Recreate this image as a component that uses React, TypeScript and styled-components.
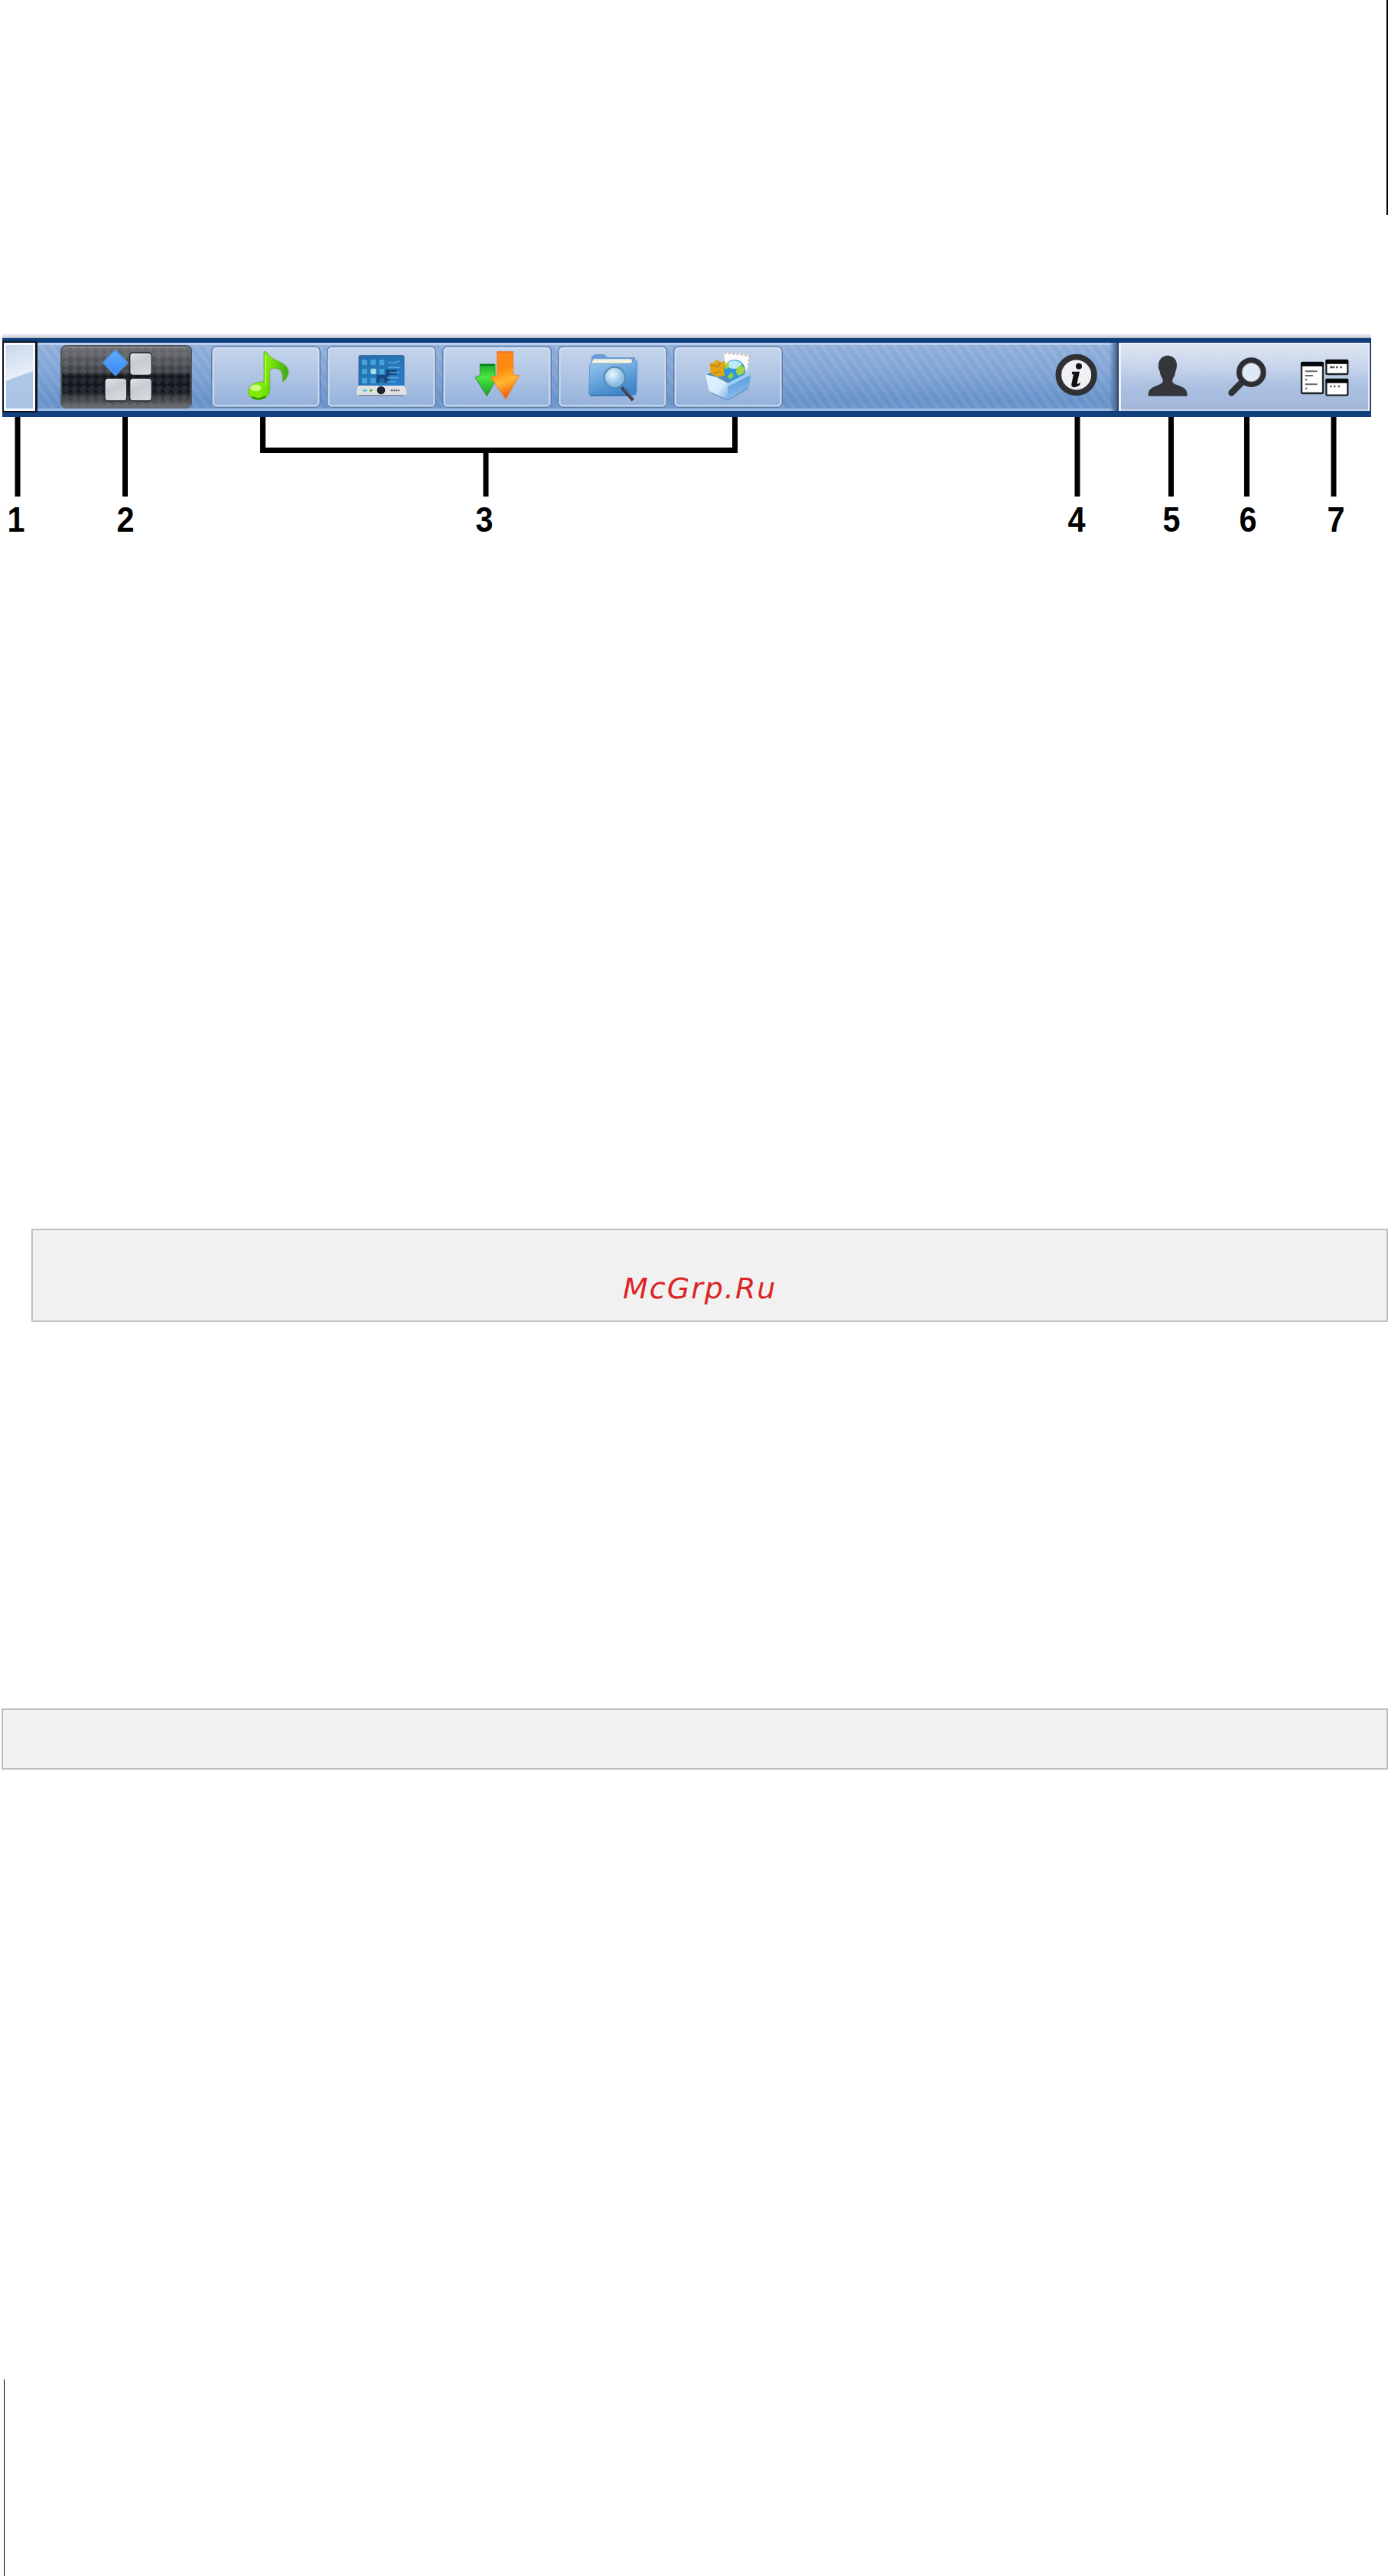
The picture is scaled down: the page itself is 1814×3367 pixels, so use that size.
import React from 'react';
import styled, { createGlobalStyle } from 'styled-components';

const GlobalStyle = createGlobalStyle`
  body {
    margin: 0;
    background: #ffffff;
  }
`;

const Page = styled.main`
  display: flex;
  flex-direction: column;
  width: 1814px;
  height: 3367px;
  overflow: hidden;
  background: #ffffff;
`;

const HeaderRule = styled.div`
  align-self: flex-end;
  width: 2px;
  height: 281px;
  background: #000;
`;

const Figure = styled.figure`
  margin: 156px 0 0 3px;
  width: 1789px;
  height: 269px;
`;

const TopStrip = styled.div`
  height: 5px;
  background: linear-gradient(#dce3ee 0 50%, #c4c1c4 60% 100%);
`;

const Taskbar = styled.div`
  box-sizing: border-box;
  display: flex;
  height: 103px;
  border-top: 6px solid #0f3e7c;
  border-bottom: 8px solid #123f7d;
  background:
    linear-gradient(#bccfea, #bccfea) top / 100% 3px no-repeat,
    linear-gradient(#a3bee6, #a3bee6) bottom / 100% 3px no-repeat,
    repeating-linear-gradient(55deg, rgba(255, 255, 255, 0.05) 0 5px, rgba(30, 70, 150, 0.03) 5px 11px),
    linear-gradient(#94b2dc, #82a6d6 45%, #6894cb 85%, #7099cc);
`;

const ShowDesktop = styled.div`
  box-sizing: border-box;
  flex: none;
  width: 46px;
  height: 93px;
  margin: -2px 30px 0 0;
  border: solid #10151d;
  border-width: 2px 3px 2px 2px;
  box-shadow: inset 0 0 0 3px #f8fafd;
  background: linear-gradient(160deg, #c3d5ec, #e8eff8 48%, #aec6e6 50%, #a9c3e6);
`;

const MenuButton = styled.div`
  box-sizing: border-box;
  flex: none;
  width: 172px;
  height: 83px;
  margin: 3px 25px 0 0;
  border: 2px solid #4e545e;
  border-bottom: 4px solid #666a70;
  border-radius: 8px;
  box-shadow: inset 0 1px 1px #9a9a9a;
  background:
    linear-gradient(rgba(128, 128, 130, 0.85), rgba(82, 84, 88, 0.7) 42%, rgba(22, 26, 32, 0.75) 50%, rgba(24, 27, 33, 0.7) 75%, rgba(112, 112, 114, 0.85)),
    repeating-conic-gradient(from 45deg, #0b1018 0 25%, #4b515b 0 50%) 0 0 / 11px 11px;

  svg {
    display: block;
    margin: -2px;
  }
`;

const AppList = styled.div`
  display: flex;
  flex: none;
  gap: 8px;
  margin-top: 4px;
`;

const AppButton = styled.div`
  width: 143px;
  height: 81px;
  border-radius: 7px;
  box-shadow: inset 0 0 0 1.5px #5c7ba9, inset 0 0 0 3.5px #d3dff0;
  background: linear-gradient(#c6d5eb, #b1c6e5 45%, #92b0db);

  svg {
    display: block;
  }
`;

const InfoButton = styled.div`
  display: flex;
  flex: none;
  margin-left: auto;
  width: 101px;
  background: linear-gradient(90deg, transparent 88%, #4c6c99 97%, #1d304b);
`;

const Tray = styled.div`
  box-sizing: border-box;
  display: grid;
  flex: none;
  grid-template-columns: 119px 90px 121px;
  width: 330px;
  box-shadow: inset -2px 0 0 #34496a, inset 3px 0 0 #edf2f9, inset -4px 0 0 #e8effa, inset 0 2px 0 #eef3fa, inset 0 -2px 0 #ced9ec;
  background: linear-gradient(#dfe6f2, #c5d3ea 38%, #aec2e2 60%, #a0b6da);
`;

const CalloutLines = styled.svg`
  display: block;
  width: 1789px;
  height: 104px;
`;

const Labels = styled.div`
  display: flex;
  margin-top: 7px;
  height: 46px;
`;

// slightly condensed numerals
const Label = styled.span<{ $gap: number }>`
  flex: none;
  width: 26px;
  margin-left: ${({ $gap }) => $gap}px;
  color: #000;
  font: bold 46px/46px 'Liberation Sans', Arial, sans-serif;
  text-align: center;
  transform: scaleX(0.9);
`;

const NoteBox = styled.section<{ $top: number; $left: number; $height: number }>`
  box-sizing: border-box;
  flex: none;
  height: ${({ $height }) => $height}px;
  margin: ${({ $top, $left }) => `${$top}px 0 0 ${$left}px`};
  border: 2px solid #bfbfbf;
  background: #f1f1f1;
`;

const SiteName = styled.p`
  margin: 53px 0 0 771px;
  color: #dc2424;
  font: oblique 38px/46px 'DejaVu Sans', sans-serif;
  letter-spacing: 2px;
`;

const FooterRule = styled.div`
  width: 1px;
  height: 257px;
  margin: 797px 0 0 5px;
  background: #000;
`;

const MenuIcon = () => (
  <svg width="172" height="83" viewBox="237 63 516 249">
    <defs>
      <linearGradient id="tile" x1="0" y1="0" x2="0.4" y2="1">
        <stop offset="0" stopColor="#e3e6ea" />
        <stop offset="0.5" stopColor="#c6cbd1" />
        <stop offset="1" stopColor="#d5dade" />
      </linearGradient>
      <linearGradient id="gem" x1="0" y1="0" x2="0" y2="1">
        <stop offset="0" stopColor="#60b0ff" />
        <stop offset="1" stopColor="#3a86f4" />
      </linearGradient>
    </defs>
    <path d="M452 83 499 132 452 181 405 132z" fill="url(#gem)" stroke="#4c95ee" strokeWidth="6" strokeLinejoin="round" />
    <g fill="url(#tile)" stroke="#22262c" strokeWidth="4">
      <rect x="509" y="93" width="86" height="88" rx="13" />
      <rect x="411" y="193" width="86" height="89" rx="13" />
      <rect x="509" y="193" width="86" height="89" rx="13" />
    </g>
  </svg>
);

const MusicIcon = () => (
  <svg width="143" height="81" viewBox="51 66 429 243">
    <defs>
      <linearGradient id="note" x1="0" y1="0" x2="1" y2="0.3">
        <stop offset="0" stopColor="#8df000" />
        <stop offset="0.55" stopColor="#7be80a" />
        <stop offset="1" stopColor="#3fae1c" />
      </linearGradient>
    </defs>
    <path
      d="M258 88 270 92C280 116 304 120 328 133 354 148 359 166 349 187 345 196 339 204 332 206 329 196 336 177 322 163 309 151 292 151 281 160V240C279 264 260 277 236 277 211 277 197 263 197 245 198 221 222 206 258 207z"
      fill="url(#note)"
      stroke="#6fb03f"
      strokeWidth="3"
    />
    <ellipse cx="226" cy="231" rx="22" ry="13" fill="#dcff9a" opacity="0.8" />
    <path d="M210 266Q238 283 264 264" fill="none" stroke="#2c9500" strokeWidth="7" />
    <path d="M264 102V220" stroke="#b5ff30" strokeWidth="5" />
  </svg>
);

const MonitorIcon = () => (
  <svg width="143" height="81" viewBox="504 66 429 243">
    <defs>
      <linearGradient id="screen" x1="0" y1="0" x2="1" y2="1">
        <stop offset="0" stopColor="#286dac" />
        <stop offset="1" stopColor="#2480c7" />
      </linearGradient>
    </defs>
    <rect x="630" y="104" width="177" height="123" rx="4" fill="url(#screen)" stroke="#2b6698" strokeWidth="3" />
    <path d="M735 160H778V180H748V211H700V180H735z" fill="#153f72" opacity="0.85" />
    <g fill="#4aa8dc">
      {[120, 156, 192].map((y) =>
        [642, 676, 710].map((x) => <rect key={`${x}-${y}`} x={x} y={y} width="20" height="22" rx="4" opacity={x === 710 && y === 192 ? 0.3 : 0.9} />),
      )}
    </g>
    <rect x="677" y="155" width="21" height="22" rx="5" fill="#a2e1dc" />
    <path d="M744 132H775L790 125M744 151H790M752 171H788M741 191H785M741 207H774" stroke="#5aa5da" strokeWidth="5" fill="none" />
    <path d="M628 222H807L818 246Q818 260 803 260H635Q619 260 621 246z" fill="#e2e2e5" />
    <path d="M630 261H806" stroke="#77839a" strokeWidth="4" />
    <circle cx="717" cy="240" r="16" fill="#18252d" />
    <rect x="644" y="236" width="19" height="9" rx="4" fill="#68c5d9" />
    <path d="M672 234 687 241 672 248z" fill="#55b72a" />
    <path d="M755 241H791" stroke="#665d65" strokeWidth="6" strokeDasharray="7 2" />
  </svg>
);

const DownloadIcon = () => (
  <svg width="143" height="81" viewBox="57 66 429 243">
    <defs>
      <linearGradient id="orange" x1="0" y1="0" x2="0.25" y2="1">
        <stop offset="0" stopColor="#ff8520" />
        <stop offset="0.45" stopColor="#ff8b0b" />
        <stop offset="0.7" stopColor="#ffb92e" />
        <stop offset="1" stopColor="#f1641b" />
      </linearGradient>
      <linearGradient id="green" x1="0" y1="0" x2="0" y2="1">
        <stop offset="0" stopColor="#16a922" />
        <stop offset="0.4" stopColor="#4be744" />
        <stop offset="1" stopColor="#149d27" />
      </linearGradient>
    </defs>
    <path d="M205 138H264V186H275L232 263 186 190 205 182z" fill="url(#green)" stroke="#2d9837" strokeWidth="3" strokeLinejoin="round" />
    <path d="M205 141H261" stroke="#087b22" strokeWidth="6" />
    <path d="M272 89H335V181H359L306 276 247 189 272 183z" fill="url(#orange)" stroke="#e78135" strokeWidth="3" strokeLinejoin="round" />
    <path d="M274 91H333" stroke="#ed7427" strokeWidth="5" />
  </svg>
);

const FileSearchIcon = () => (
  <svg width="143" height="81" viewBox="510 66 429 243">
    <defs>
      <linearGradient id="folder" x1="0" y1="0" x2="0.5" y2="1">
        <stop offset="0" stopColor="#9dcaf0" />
        <stop offset="1" stopColor="#3e86cb" />
      </linearGradient>
      <radialGradient id="lens" cx="0.4" cy="0.35">
        <stop offset="0" stopColor="#ecf9ff" />
        <stop offset="1" stopColor="#8dbce2" />
      </radialGradient>
    </defs>
    <path d="M636 150 643 107 656 99H691L705 111H812L819 150z" fill="#6a9dd5" />
    <path d="M641 136 650 118H798L806 137z" fill="#f1f2df" />
    <path d="M635 143Q637 136 648 136H797L806 123Q822 120 822 132L819 248Q818 261 804 261H639Q632 261 632 252z" fill="url(#folder)" stroke="#639ad2" strokeWidth="3" />
    <path d="M636 261H780" stroke="#38699e" strokeWidth="4" />
    <circle cx="733" cy="190" r="41" fill="url(#lens)" stroke="#5486b5" strokeWidth="6" />
    <path d="M761 229 805 279" stroke="#3a3a4c" strokeWidth="13" />
    <path d="M767 232 803 270" stroke="#6d6570" strokeWidth="4" />
  </svg>
);

const PackageIcon = () => (
  <svg width="143" height="81" viewBox="963 66 429 243">
    <defs>
      <linearGradient id="boxFront" x1="0" y1="0" x2="1" y2="1">
        <stop offset="0" stopColor="#e3f4ff" />
        <stop offset="0.6" stopColor="#d4ebfc" />
        <stop offset="1" stopColor="#76abdf" />
      </linearGradient>
      <linearGradient id="boxSide" x1="0" y1="0" x2="0.3" y2="1">
        <stop offset="0" stopColor="#4a91db" />
        <stop offset="1" stopColor="#8fbeed" />
      </linearGradient>
    </defs>
    <path d="M1090 181 1150 151 1266 184 1177 216z" fill="#5588bd" />
    <path d="M1160 92 1261 101 1256 162 1168 154z" fill="#fafbfc" />
    <path d="M1163 95 1260 104 1255 158" fill="none" stroke="#d2a9aa" strokeWidth="5" strokeDasharray="8 8" />
    <path d="M1105 135 1123 132 1133 119 1147 130 1167 125 1164 183 1136 188 1109 174z" fill="#e3a512" />
    <path d="M1108 139 1138 148 1148 133M1120 173 1148 168" fill="none" stroke="#b08822" strokeWidth="5" />
    <circle cx="1203" cy="163" r="42" fill="#3197da" />
    <ellipse cx="1202" cy="140" rx="29" ry="16" fill="#bce8f7" />
    <path d="M1211 153 1228 141 1243 155 1239 174 1218 184 1209 170zM1167 139 1180 130 1181 149 1166 161z" fill="#a4d33e" />
    <path d="M1175 187 1190 169 1201 184 1186 197z" fill="#9bce40" />
    <path d="M1089 178 1135 190 1176 212V278L1112 249Q1103 244 1101 234z" fill="url(#boxFront)" />
    <path d="M1176 214 1267 178 1259 231 1176 278z" fill="url(#boxSide)" />
    <path d="M1176 212 1249 175 1267 180 1178 225z" fill="#a1cdf5" />
    <path d="M1112 251 1176 279 1256 233" fill="none" stroke="#6793c3" strokeWidth="4" />
  </svg>
);

const InfoIcon = () => (
  <svg width="100" height="89" viewBox="63 54 300 267">
    <circle cx="200" cy="180" r="70" fill="#f0f1f4" stroke="#2f3135" strokeWidth="23" />
    <circle cx="210" cy="146" r="12" fill="#111" />
    <path d="M184 167H213L203 213Q203 219 216 210L213 220Q200 231 188 228 179 225 181 216L189 178H182z" fill="#111" />
  </svg>
);

const UserIcon = () => (
  <svg width="119" height="89" viewBox="366 54 357 267">
    <path
      d="M558 104C579 104 594 119 594 140 594 152 592 160 589 166 587 182 582 191 577 197V207C579 218 611 222 625 234 634 242 635 251 635 263H482C482 251 483 242 492 234 506 222 535 219 539 207V197C534 190 529 181 527 166 523 160 521 151 522 140 523 119 538 104 558 104z"
      fill="#35363a"
    />
  </svg>
);

const SearchIcon = () => (
  <svg width="90" height="89" viewBox="723 54 270 267">
    <path d="M851 207 809 250" stroke="#303238" strokeWidth="26" strokeLinecap="round" />
    <circle cx="886" cy="170" r="47" fill="#dfe8f5" stroke="#2c2e33" strokeWidth="22" />
    <circle cx="886" cy="170" r="37" fill="none" stroke="#8d929c" strokeWidth="3" />
  </svg>
);

const WidgetsIcon = () => (
  <svg width="121" height="89" viewBox="993 54 363 267">
    <g fill="#fff" stroke="#202329" strokeWidth="7">
      <rect x="1083" y="132" width="84" height="120" rx="4" />
      <rect x="1180" y="123" width="84" height="54" rx="4" />
      <rect x="1180" y="198" width="84" height="62" rx="4" />
    </g>
    <path d="M1081 138H1169M1178 129H1266M1178 204H1266" stroke="#050608" strokeWidth="16" />
    <path d="M1097 166H1145M1097 183H1128M1097 199H1105M1097 217H1145M1097 233H1105" stroke="#64676d" strokeWidth="6" />
    <path d="M1194 150H1213M1218 150H1226M1234 150H1242M1194 225H1201M1209 225H1216M1226 225H1233" stroke="#55575c" strokeWidth="7" />
  </svg>
);

const labels = [
  { text: '1', gap: 4.5 },
  { text: '2', gap: 117 },
  { text: '3', gap: 443.5 },
  { text: '4', gap: 748 },
  { text: '5', gap: 98 },
  { text: '6', gap: 74 },
  { text: '7', gap: 89 },
];

const App: React.FC = () => {
  return (
    <Page>
      <GlobalStyle />
      <HeaderRule />
      <Figure>
        <TopStrip />
        <Taskbar>
          <ShowDesktop />
          <MenuButton>
            <MenuIcon />
          </MenuButton>
          <AppList>
            <AppButton><MusicIcon /></AppButton>
            <AppButton><MonitorIcon /></AppButton>
            <AppButton><DownloadIcon /></AppButton>
            <AppButton><FileSearchIcon /></AppButton>
            <AppButton><PackageIcon /></AppButton>
          </AppList>
          <InfoButton>
            <InfoIcon />
          </InfoButton>
          <Tray>
            <UserIcon />
            <SearchIcon />
            <WidgetsIcon />
          </Tray>
        </Taskbar>
        <CalloutLines viewBox="3 545 1789 104" fill="none" stroke="#000" strokeWidth="7">
          <path d="M23 545V649M163.5 545V649M343.5 545V588.5H960.5V545M635 588V649" />
          <path d="M1408 545V649M1530.5 545V649M1629.5 545V649M1743 545V649" />
        </CalloutLines>
        <Labels>
          {labels.map(({ text, gap }) => (
            <Label key={text} $gap={gap}>{text}</Label>
          ))}
        </Labels>
      </Figure>
      <NoteBox $top={900} $left={41} $height={122}>
        <SiteName>McGrp.Ru</SiteName>
      </NoteBox>
      <NoteBox $top={505} $left={2} $height={80} />
      <FooterRule />
    </Page>
  );
};

export default App;
